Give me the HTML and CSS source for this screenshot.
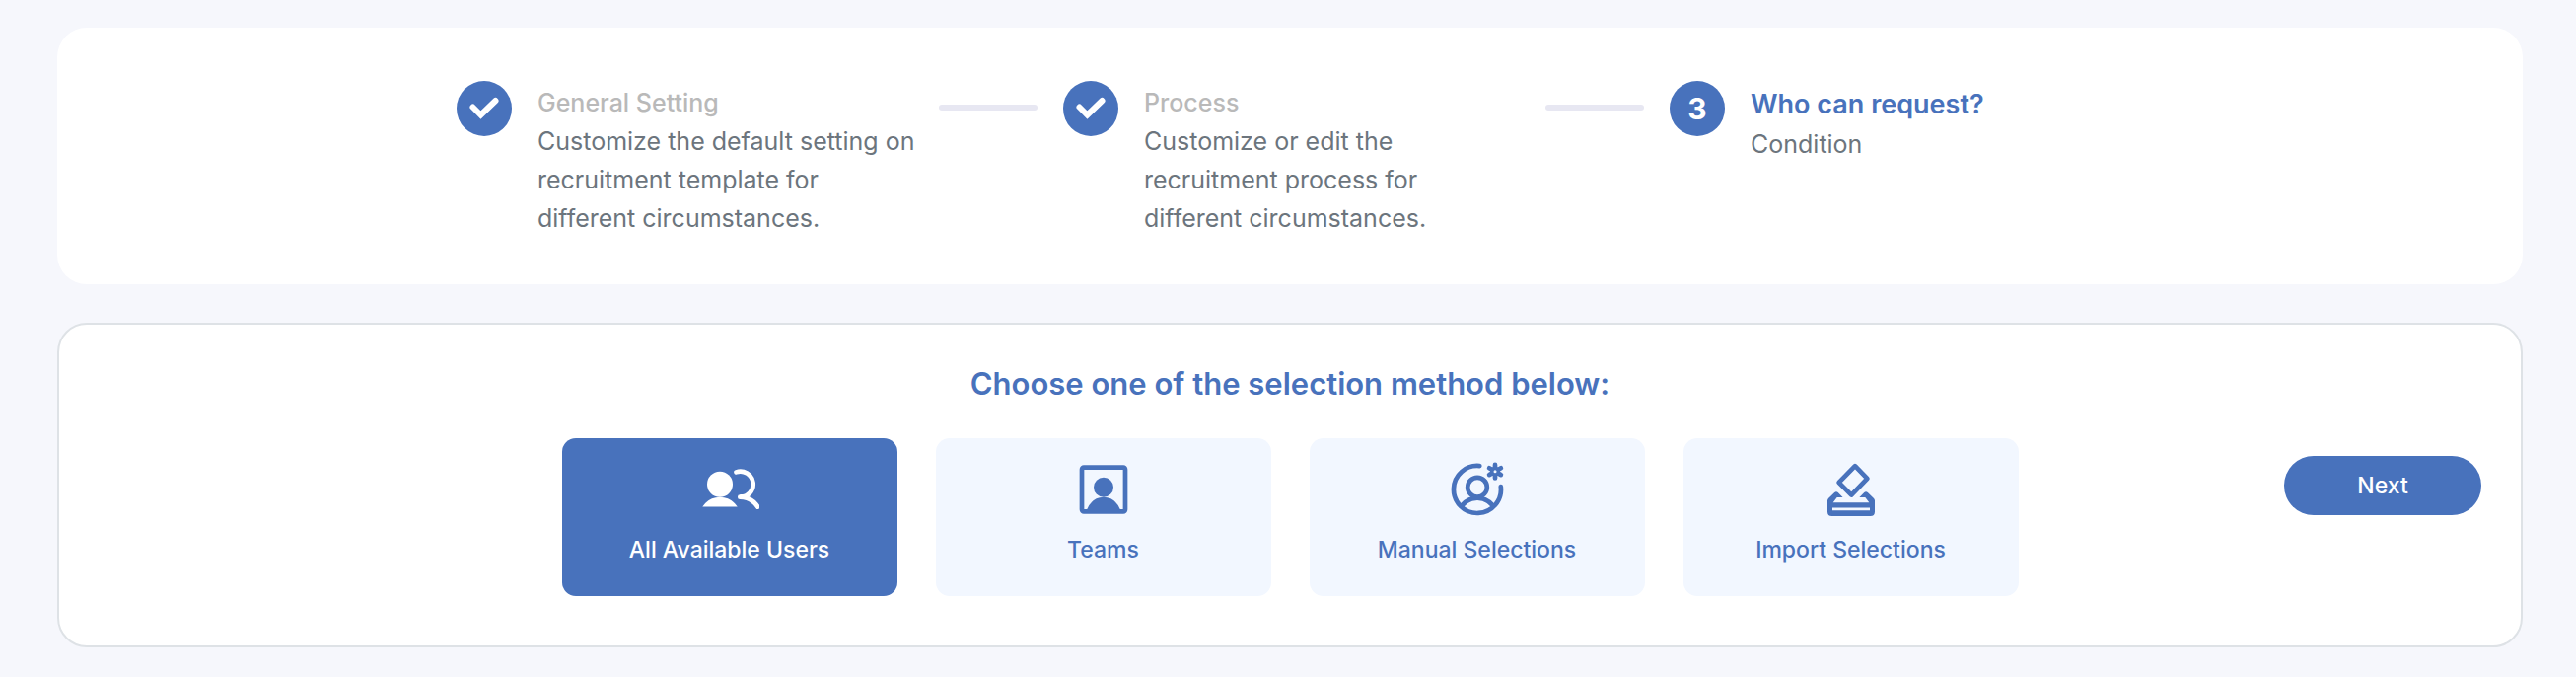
FILE: index.html
```
<!DOCTYPE html>
<html lang="en">
<head>
    <meta charset="UTF-8">
    <meta name="viewport" content="width=device-width, initial-scale=1.0">
    <title>Recruitment Template - Who can request?</title>
    <link rel="stylesheet" href="styles.css">
</head>
<body>
    <main class="page">
        <section class="card">
            <ol class="steps">
                <li class="step">
                    <span class="step-badge">
                        <svg viewBox="0 0 56 56" aria-hidden="true"><path d="M16.5 26.5 L24.5 34.5 L39.5 20"/></svg>
                    </span>
                    <div class="step-body">
                        <h3 class="step-title">General Setting</h3>
                        <p class="step-text">Customize the default setting on recruitment template for <br>different circumstances.</p>
                    </div>
                    <span class="step-line"></span>
                </li>
                <li class="step">
                    <span class="step-badge">
                        <svg viewBox="0 0 56 56" aria-hidden="true"><path d="M16.5 26.5 L24.5 34.5 L39.5 20"/></svg>
                    </span>
                    <div class="step-body">
                        <h3 class="step-title">Process</h3>
                        <p class="step-text">Customize or edit the recruitment process for <br>different circumstances.</p>
                    </div>
                    <span class="step-line"></span>
                </li>
                <li class="step current" aria-current="step">
                    <span class="step-badge">3</span>
                    <div class="step-body">
                        <h3 class="step-title">Who can request?</h3>
                        <p class="step-text">Condition</p>
                    </div>
                </li>
            </ol>
        </section>

        <section class="card selection">
            <div class="selection-main">
                <h2 class="selection-title">Choose one of the selection method below:</h2>
                <div class="methods">
                    <button type="button" class="method active" aria-pressed="true">
                        <svg class="method-icon" viewBox="0 0 60 60" aria-hidden="true">
                            <circle class="solid" cx="20" cy="24.7" r="13"/>
                            <path class="solid" d="M2.3 47.4 Q9 37.8 20 37.8 Q31 37.8 37.7 47.4 Z"/>
                            <path class="line" d="M36.5 12.4 A13 13 0 1 1 40.3 37.7 Q52 38 58.4 47.6"/>
                        </svg>
                        All Available Users
                    </button>
                    <button type="button" class="method" aria-pressed="false">
                        <svg class="method-icon" viewBox="0 0 60 60" aria-hidden="true">
                            <rect class="line" x="8" y="7.7" width="44" height="44.6" rx="2"/>
                            <circle class="solid" cx="30" cy="27.7" r="10"/>
                            <path class="solid" d="M12.5 51.5 Q18 37.8 30 37.8 Q42 37.8 47.5 51.5 Z"/>
                        </svg>
                        Teams
                    </button>
                    <button type="button" class="method" aria-pressed="false">
                        <svg class="method-icon" viewBox="0 0 60 60" aria-hidden="true">
                            <path class="line" d="M32.3 6.1 A24 24 0 1 0 53.8 27.2"/>
                            <circle class="line" cx="30" cy="27.7" r="9.8"/>
                            <path class="line" d="M14.4 46.2 Q21 38.6 30 38.6 Q39 38.6 45.6 46.2"/>
                            <path class="line" d="M48 4.9 V18.5 M42.1 8.3 L53.9 15.1 M42.1 15.1 L53.9 8.3"/>
                            <circle class="solid" cx="48" cy="11.7" r="5"/>
                            <circle class="hole" cx="48" cy="11.7" r="1.5"/>
                        </svg>
                        Manual Selections
                    </button>
                    <button type="button" class="method" aria-pressed="false">
                        <svg class="method-icon" viewBox="0 0 60 60" aria-hidden="true">
                            <path class="line" d="M34 6.2 L46.4 18.9 L30.3 35.6 L17.6 22.9 Z"/>
                            <path class="solid" fill-rule="evenodd" d="M6 41.5 Q6 40 7 39 L13.2 33 Q15 31.4 16.7 33 L21.6 38 H15.7 L11.7 43.3 H48.3 L44.3 38 H38.4 L43.3 33 Q45 31.4 46.8 33 L53 39 Q54 40 54 41.5 V52.5 Q54 57 49.5 57 H10.5 Q6 57 6 52.5 Z M11 48.4 V51.3 H49 V48.4 Z"/>
                        </svg>
                        Import Selections
                    </button>
                </div>
            </div>
            <button type="button" class="next-btn">Next</button>
        </section>
    </main>
</body>
</html>
```
FILE: styles.css
```
* {
    box-sizing: border-box;
}
body {
    font-family: Inter, 'Open Sans', sans-serif;
    background: #f6f7fc;
    color: #6c757d;
    font-size: 25px;
    line-height: 39px;
    margin: 0;
}
h2, h3, p, ol {
    margin: 0;
    padding: 0;
}
button {
    font-family: inherit;
    border: none;
    cursor: pointer;
}
.page {
    display: flex;
    flex-direction: column;
    gap: 39px;
    padding: 28px 54px 28px 58px;
}
.card {
    background: #fff;
    border-radius: 30px;
}

/* Stepper */
.steps {
    display: flex;
    justify-content: center;
    gap: 26px;
    padding: 54px 40px 47px;
    list-style: none;
}
.step {
    display: flex;
    align-items: flex-start;
}
.step-badge {
    display: flex;
    align-items: center;
    justify-content: center;
    flex: none;
    width: 56px;
    height: 56px;
    margin-right: 26px;
    border-radius: 50%;
    background: #4872bc;
    color: #fff;
    font-size: 30px;
    font-weight: 700;
}
.step-badge svg {
    width: 100%;
    fill: none;
    stroke: #fff;
    stroke-width: 6;
    stroke-linecap: round;
}
.step-body {
    width: 390px;
    padding-top: 3px;
}
.step.current .step-body {
    width: 378px;
}
.step-title {
    color: #b9b9b9;
    font-size: 25px;
    font-weight: 500;
}
.step.current .step-title {
    color: #4872bc;
    font-size: 27px;
    font-weight: 600;
    line-height: 42px;
}
.step-line {
    flex: none;
    width: 100px;
    height: 6px;
    margin: 24px 0 0 17px;
    border-radius: 3px;
    background: #e7e7f2;
}

/* Selection method */
.selection {
    display: grid;
    grid-template-columns: 1fr auto 1fr;
    align-items: center;
    padding: 0 40px;
    border: 2px solid #dee2e6;
}
.selection-main {
    grid-column: 2;
    padding: 36px 0 50px;
}
.selection-title {
    margin-bottom: 31px;
    color: #4872bc;
    font-size: 31px;
    font-weight: 600;
    line-height: 48px;
    text-align: center;
}
.methods {
    display: flex;
    gap: 39px;
}
.method {
    display: flex;
    flex-direction: column;
    align-items: center;
    gap: 13px;
    width: 340px;
    padding: 22px 10px 29px;
    border-radius: 14px;
    background: #f2f7ff;
    color: #4872bc;
    font-size: 23px;
    font-weight: 500;
    line-height: 36px;
}
.method.active {
    background: #4872bc;
    color: #fff;
}
.method-icon {
    width: 60px;
    height: 60px;
}
.method-icon .solid {
    fill: currentColor;
}
.method-icon .line {
    fill: none;
    stroke: currentColor;
    stroke-width: 4.7;
    stroke-linecap: round;
    stroke-linejoin: round;
}
.method-icon .hole {
    fill: #f2f7ff;
}
.next-btn {
    justify-self: end;
    width: 200px;
    padding: 12px 20px;
    border-radius: 30px;
    background: #4872bc;
    color: #fff;
    font-size: 23px;
    font-weight: 500;
    line-height: 36px;
}
```
